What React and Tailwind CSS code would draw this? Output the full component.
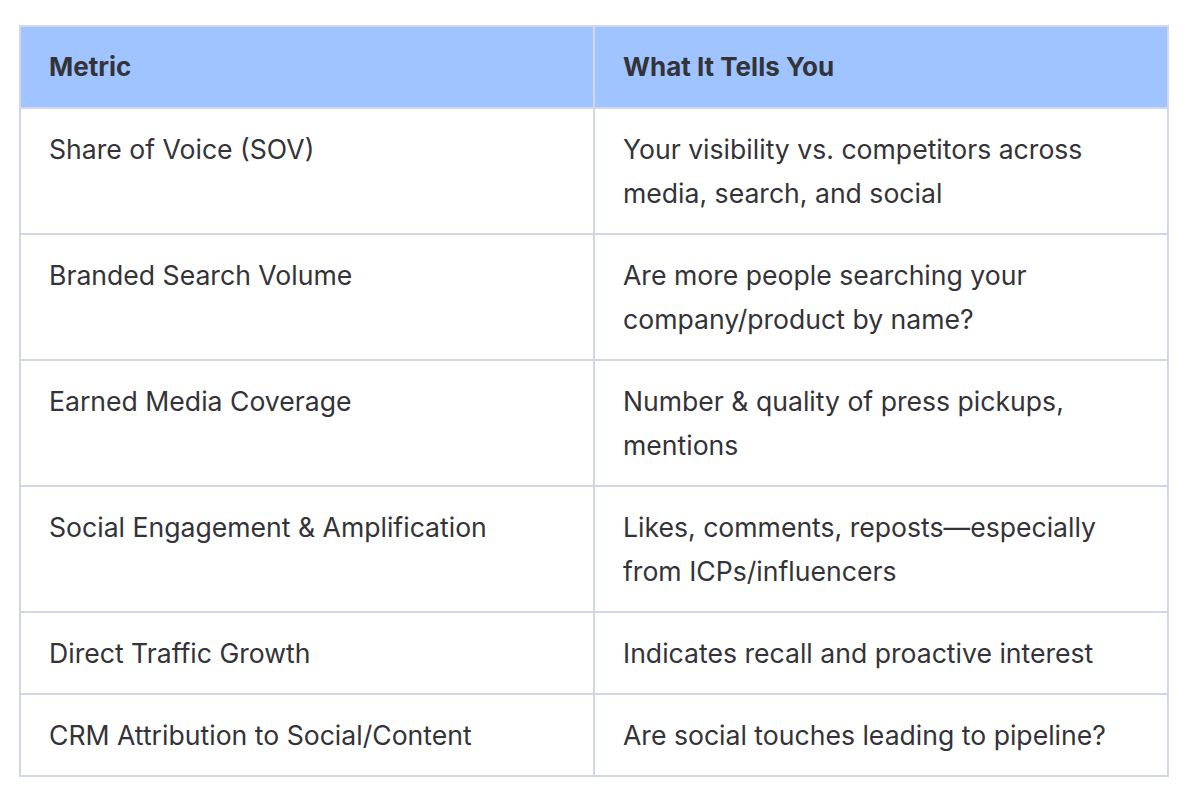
import React from "react";

const rows = [
  ["Share of Voice (SOV)", "Your visibility vs. competitors across media, search, and social"],
  ["Branded Search Volume", "Are more people searching your company/product by name?"],
  ["Earned Media Coverage", "Number & quality of press pickups, mentions"],
  ["Social Engagement & Amplification", "Likes, comments, reposts—especially from ICPs/influencers"],
  ["Direct Traffic Growth", "Indicates recall and proactive interest"],
  ["CRM Attribution to Social/Content", "Are social touches leading to pipeline?"],
];

const App = () => {
  return (
    <div className="min-h-screen bg-white pl-[19px] pt-[25px] font-['Inter',sans-serif] text-[#333338]">
      <table className="w-[1150px] table-fixed border-collapse border-2 border-[#d3d6e6] text-[26.6px] leading-[44px]">
        <thead>
          <tr className="bg-[#a0c4ff]">
            <th className="border-2 border-[#d3d6e6] px-[28px] py-[18px] text-left text-[26px] font-bold">
              Metric
            </th>
            <th className="border-2 border-[#d3d6e6] px-[28px] py-[18px] text-left text-[26px] font-bold">
              What It Tells You
            </th>
          </tr>
        </thead>
        <tbody>
          {rows.map(([metric, tells]) => (
            <tr key={metric}>
              <td className="border-2 border-[#d3d6e6] px-[28px] py-[18px] align-top">
                {metric}
              </td>
              <td className="border-2 border-[#d3d6e6] px-[28px] py-[18px] align-top">
                {tells}
              </td>
            </tr>
          ))}
        </tbody>
      </table>
    </div>
  );
};

export default App;
